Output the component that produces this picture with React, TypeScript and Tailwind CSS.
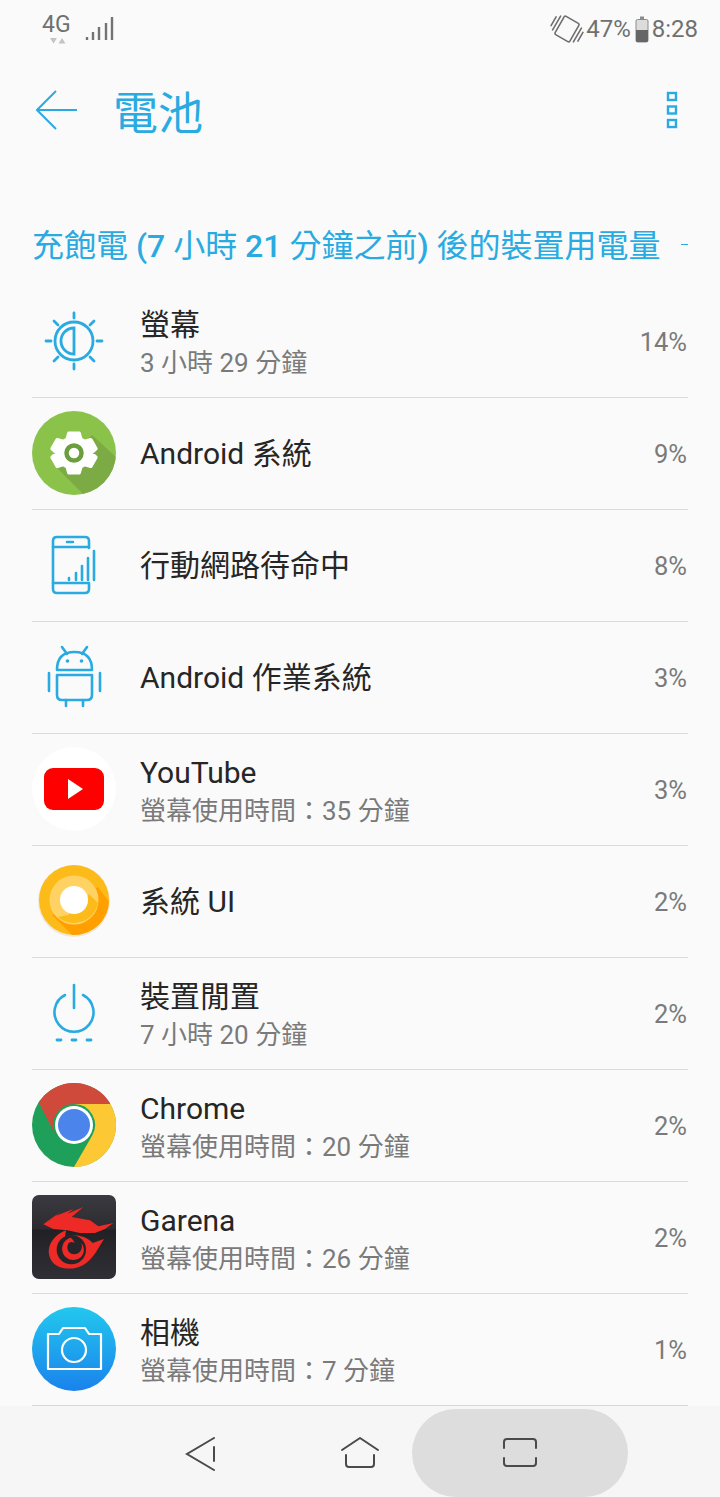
import React from 'react';

const FONT = { fontFamily: 'Roboto, "Noto Sans CJK TC", sans-serif' };

const BLUE = '#29abe2';

const ScreenIcon = () => (
    <svg width="64" height="64" viewBox="0 0 64 64" fill="none" stroke={BLUE} strokeWidth="2.800" strokeLinecap="round">
        <circle cx="32" cy="32" r="19" />
        <path d="M32 19 A13 13 0 0 0 32 45 Z" />
        <path d="M32 4 V9 M32 55 V60 M4 32 H9 M55 32 H60 M12 12 L16 16 M52 12 L48 16 M12 52 L16 48 M52 52 L48 48" />
    </svg>
);

const SystemIcon = () => (
    <svg width="84" height="84" viewBox="0 0 84 84">
        <defs>
            <clipPath id="sysClip"><circle cx="42" cy="42" r="42" /></clipPath>
        </defs>
        <circle cx="42" cy="42" r="42" fill="#8bc34a" />
        <path d="M26 58 L52 84 H84 V46 L60 24 Z" fill="#7cab45" clipPath="url(#sysClip)" />
        <g transform="translate(42 42) scale(0.86) translate(-42 -42)">
            <path
                d="M36 19 H48 L50 26 L54.500 28.500 L61.500 26.500 L67.500 37 L62 42 L67.500 47 L61.500 57.500 L54.500 55.500 L50 58 L48 65 H36 L34 58 L29.500 55.500 L22.500 57.500 L16.500 47 L22 42 L16.500 37 L22.500 26.500 L29.500 28.500 L34 26 Z"
                fill="#fff"
                stroke="#fff"
                strokeWidth="4"
                strokeLinejoin="round"
            />
        </g>
        <circle cx="42" cy="42" r="7.500" fill="none" stroke="#6c9e3e" strokeWidth="4.500" />
    </svg>
);

const MobileIcon = () => (
    <svg width="64" height="64" viewBox="0 0 64 64" fill="none" stroke={BLUE} strokeWidth="2.600" strokeLinecap="round" strokeLinejoin="round">
        <path d="M47 15 V8 Q47 4 43 4 H15 Q11 4 11 8 V56 Q11 60 15 60 H43 Q47 60 47 56 V51" />
        <path d="M11 14 H47 M11 50 H47 M25 9 H31" />
        <path d="M27 47 V45 M34 47 V40 M40 47 V33 M46 47 V25 M52 47 V18" />
    </svg>
);

const AndroidOutline = () => (
    <svg width="64" height="64" viewBox="0 0 64 64" fill="none" stroke={BLUE} strokeWidth="2.600" strokeLinecap="round" strokeLinejoin="round">
        <path d="M15 25 Q15 7 32.500 7 Q50 7 50 25 Z" />
        <path d="M25 9 L20 2 M40 9 L45 2" />
        <path d="M15 30 H50 V50 Q50 55 45 55 H20 Q15 55 15 50 Z" />
        <path d="M7 28 V46 M58 28 V46 M24 55 V61 M41 55 V61" />
        <circle cx="25.500" cy="16" r="1.800" fill={BLUE} stroke="none" />
        <circle cx="39.500" cy="16" r="1.800" fill={BLUE} stroke="none" />
    </svg>
);

const YouTubeIcon = () => (
    <svg width="84" height="84" viewBox="0 0 84 84">
        <circle cx="42" cy="42" r="42" fill="#fff" />
        <rect x="12" y="21" width="60" height="42" rx="9" fill="#f00" />
        <path d="M36 32 L51 42 L36 52 Z" fill="#fff" />
    </svg>
);

const OreoIcon = () => (
    <svg width="72" height="72" viewBox="0 0 72 72">
        <defs>
            <clipPath id="oreoClip"><circle cx="36" cy="35" r="35" /></clipPath>
        </defs>
        <circle cx="36" cy="36" r="36" fill="#eee8d8" />
        <circle cx="36" cy="35" r="35" fill="#fdbb1a" />
        <path d="M14 50 L36 72 H72 V38 L60 22 Z" fill="#ff9f00" clipPath="url(#oreoClip)" />
        <circle cx="36" cy="35" r="24.500" fill="#ffd263" />
        <path d="M20 52 A24.500 24.500 0 0 0 60 38 L51 29 L30 50 Z" fill="#fdbb1a" />
        <circle cx="36" cy="35" r="14" fill="#fff" />
    </svg>
);

const IdleIcon = () => (
    <svg width="64" height="64" viewBox="0 0 64 64" fill="none" stroke={BLUE} strokeWidth="2.600" strokeLinecap="round">
        <path d="M23 14 A19.500 19.500 0 1 0 41 14" />
        <path d="M32 4 V27" />
        <path d="M15 59 H19 M30 59 H34 M45 59 H49" strokeWidth="2.800" />
    </svg>
);

const ChromeIcon = () => (
    <svg width="84" height="84" viewBox="0 0 84 84">
        <circle cx="42" cy="42" r="42" fill="#1fa05a" />
        <path d="M42 0 A42 42 0 0 1 78.400 21 H42 A21 21 0 0 0 23.800 52.500 L6.800 19.500 A42 42 0 0 1 42 0 Z" fill="#cf4a3a" />
        <path d="M78.400 21 A42 42 0 0 1 42 84 L60.200 52.500 A21 21 0 0 0 42 21 Z" fill="#fcc934" />
        <circle cx="42" cy="42" r="19" fill="#fff" />
        <circle cx="42" cy="42" r="16" fill="#4b84ea" />
    </svg>
);

const GarenaIcon = () => (
    <svg width="84" height="84" viewBox="6 6 252 252">
        <defs>
            <linearGradient id="garenaBg" x1="0" y1="0" x2="0" y2="1">
                <stop offset="0" stopColor="#3a3a40" />
                <stop offset="0.400" stopColor="#2b2b30" />
                <stop offset="0.420" stopColor="#212125" />
                <stop offset="1" stopColor="#302f36" />
            </linearGradient>
        </defs>
        <rect x="6" y="6" width="252" height="252" rx="21" fill="url(#garenaBg)" />
        {/* head and mane */}
        <path
            d="M160 42 L112 62 L130 48 L78 68 L92 56 L40 94 L70 108 L112 112 L150 120 L195 120 L225 108 L250 90 L205 100 L180 82 L125 72 Z"
            fill="#ee2a26"
        />
        {/* body of the G */}
        <path
            d="M108 112 C68 128 48 162 60 194 C72 228 125 236 160 216 C190 198 205 165 222 138 L188 150 C170 128 130 120 105 132 Z"
            fill="#ee2a26"
        />
        <circle cx="124" cy="170" r="44" fill="#252529" />
        {/* eye of the spiral */}
        <path
            d="M122 134 C104 138 92 158 98 178 C104 198 128 208 148 196 C164 186 166 164 154 150 C160 166 150 184 132 184 C116 184 108 168 114 154 C118 146 126 146 134 150 C130 142 128 138 122 134 Z"
            fill="#ee2a26"
        />
    </svg>
);

const CameraIcon = () => (
    <svg width="84" height="84" viewBox="0 0 84 84">
        <defs>
            <linearGradient id="camBg" x1="0" y1="0" x2="0" y2="1">
                <stop offset="0" stopColor="#22c8ee" />
                <stop offset="1" stopColor="#1a82ec" />
            </linearGradient>
        </defs>
        <circle cx="42" cy="42" r="42" fill="url(#camBg)" />
        <path
            d="M16 27 H27 L31 21 H53 L57 27 H69 V62 H16 Z"
            fill="none"
            stroke="#fff"
            strokeWidth="2.200"
            strokeLinejoin="round"
        />
        <circle cx="42" cy="43" r="12" fill="none" stroke="#fff" strokeWidth="2.200" />
    </svg>
);

interface UsageRow {
    icon: React.ReactNode;
    title: string;
    sub?: string;
    pct: string;
}

const rows: UsageRow[] = [
    { icon: <ScreenIcon />, title: '螢幕', sub: '3 小時 29 分鐘', pct: '14%' },
    { icon: <SystemIcon />, title: 'Android 系統', pct: '9%' },
    { icon: <MobileIcon />, title: '行動網路待命中', pct: '8%' },
    { icon: <AndroidOutline />, title: 'Android 作業系統', pct: '3%' },
    { icon: <YouTubeIcon />, title: 'YouTube', sub: '螢幕使用時間：35 分鐘', pct: '3%' },
    { icon: <OreoIcon />, title: '系統 UI', pct: '2%' },
    { icon: <IdleIcon />, title: '裝置閒置', sub: '7 小時 20 分鐘', pct: '2%' },
    { icon: <ChromeIcon />, title: 'Chrome', sub: '螢幕使用時間：20 分鐘', pct: '2%' },
    { icon: <GarenaIcon />, title: 'Garena', sub: '螢幕使用時間：26 分鐘', pct: '2%' },
    { icon: <CameraIcon />, title: '相機', sub: '螢幕使用時間：7 分鐘', pct: '1%' },
];

const StatusBar: React.FC = () => (
    <div className="flex h-[56px] items-start justify-between pl-[42px] pr-[22px] pt-[13px] text-[#707070]">
        <div className="flex items-start">
            <div className="relative w-[31px]">
                <span className="block text-[23px] leading-[24px]">4G</span>
                <svg className="absolute left-[8px] top-[25px]" width="16" height="6" viewBox="0 0 16 6">
                    <path d="M0 0 H7 L3.500 5.500 Z M8.500 5.500 H15.500 L12 0 Z" fill="#c4c4c4" />
                </svg>
            </div>
            <svg className="ml-[12px] mt-[2px]" width="30" height="26" viewBox="0 0 30 26" stroke="#737373" strokeWidth="2.400">
                <path d="M2 25 V22 M8 25 V17 M14 25 V12 M21 25 V8 M27 25 V2" />
            </svg>
        </div>
        <div className="flex items-center">
            <svg width="34" height="32" viewBox="0 0 34 32" fill="none" stroke="#6e6e6e" strokeWidth="1.600" strokeLinecap="round" strokeLinejoin="round">
                <g transform="translate(17 16) rotate(30)">
                    <rect x="-8.500" y="-10.500" width="17" height="21" rx="1.500" />
                    <path d="M-12 -8 V8 M-15.500 -5 V5 M12 -8 V8 M15.500 -5 V5" />
                </g>
            </svg>
            <span className="ml-[2px] text-[24px] leading-[28px]">47%</span>
            <svg className="ml-[4px]" width="14" height="27" viewBox="0 0 14 27">
                <path d="M5 0.500 H9 V3 H5 Z" fill="#8c8c8c" />
                <rect x="1" y="3.500" width="12" height="22.500" rx="1.500" fill="#dcdcdc" stroke="#8c8c8c" />
                <path d="M1 14 H13 V24.500 Q13 26 11.500 26 H2.500 Q1 26 1 24.500 Z" fill="#666" />
            </svg>
            <span className="ml-[3px] text-[24px] leading-[28px]">8:28</span>
        </div>
    </div>
);

const Header: React.FC = () => (
    <div className="flex h-[114px] items-center pl-[36px] pr-[42px]">
        <svg className="-mt-[6px]" width="42" height="40" viewBox="0 0 42 40" fill="none" stroke={BLUE} strokeWidth="2">
            <path d="M20 1 L1 20 L20 39 M1 20 H41" />
        </svg>
        <h1 className="ml-[35px] mt-[4px] flex-1 text-[45px] font-normal leading-[52px] text-[#29abe2]">電池</h1>
        <svg className="-mt-[6px]" width="12" height="38" viewBox="0 0 12 38" fill="none" stroke={BLUE} strokeWidth="2.400">
            <rect x="2" y="2" width="8" height="7" />
            <rect x="2" y="15.500" width="8" height="7" />
            <rect x="2" y="29" width="8" height="7" />
        </svg>
    </div>
);

const Row: React.FC<{ row: UsageRow }> = ({ row }) => (
    <div className="flex h-[112px] items-center border-b border-[#d9d9d9]">
        <div className="mb-[2px] flex w-[84px] shrink-0 items-center justify-center">{row.icon}</div>
        <div className={row.sub ? 'ml-[24px] flex-1 pt-[2px]' : 'ml-[24px] flex-1'}>
            <div className="text-[30px] leading-[36px] text-[#262626]">{row.title}</div>
            {row.sub && <div className="mt-[5px] text-[26px] leading-[30px] text-[#7a7a7a]">{row.sub}</div>}
        </div>
        <div className="mr-[1px] text-[25.500px] leading-[30px] text-[#7a7a7a]">{row.pct}</div>
    </div>
);

const NavBar: React.FC = () => (
    <div className="relative flex h-[91px] shrink-0 items-center justify-center bg-[#f6f6f6]">
        <div className="absolute left-[412px] top-[3px] h-[88px] w-[216px] rounded-full bg-[#dddddd]" />
        <svg className="absolute left-[185px] top-[31px]" width="32" height="34" viewBox="0 0 32 34" fill="none" stroke="#4a4a4a" strokeWidth="2" strokeLinecap="round">
            <path d="M29 1 L2 17 L29 33 M29 10 V24" />
        </svg>
        <svg className="absolute left-[340px] top-[30px]" width="40" height="34" viewBox="0 0 40 34" fill="none" stroke="#4a4a4a" strokeWidth="2" strokeLinecap="round" strokeLinejoin="round">
            <path d="M2 14 L20 2 L38 14 M6 19 V28 Q6 31 9 31 H31 Q34 31 34 28 V19" />
        </svg>
        <svg className="absolute left-[502px] top-[31px]" width="36" height="32" viewBox="0 0 36 32" fill="none" stroke="#4a4a4a" strokeWidth="2" strokeLinecap="round">
            <path d="M2 11 V5 Q2 2 5 2 H31 Q34 2 34 5 V11 M2 21 V26 Q2 29 5 29 H31 Q34 29 34 26 V21" />
        </svg>
    </div>
);

const App: React.FC = () => {
    return (
        <div className="flex h-[1497px] w-[720px] flex-col overflow-hidden bg-[#fafafa]" style={FONT}>
            <StatusBar />
            <Header />
            <div className="flex h-[116px] items-start justify-between pl-[32px] pr-[32px] pt-[58px]">
                <span className="whitespace-nowrap text-[32px] leading-[36px] text-[#29abe2]">
                    充飽電 <span className="font-medium">(7</span> 小時 <span className="font-medium">21</span> 分鐘之前<span className="font-medium">)</span> 後的裝置用電量
                </span>
                <span className="mt-[16px] h-[1px] w-[7px] bg-[#29abe2]" />
            </div>
            <div className="flex-1 overflow-hidden pl-[32px] pr-[32px]">
                {rows.map((row, i) => (
                    <Row key={i} row={row} />
                ))}
            </div>
            <NavBar />
        </div>
    );
};

export default App;
